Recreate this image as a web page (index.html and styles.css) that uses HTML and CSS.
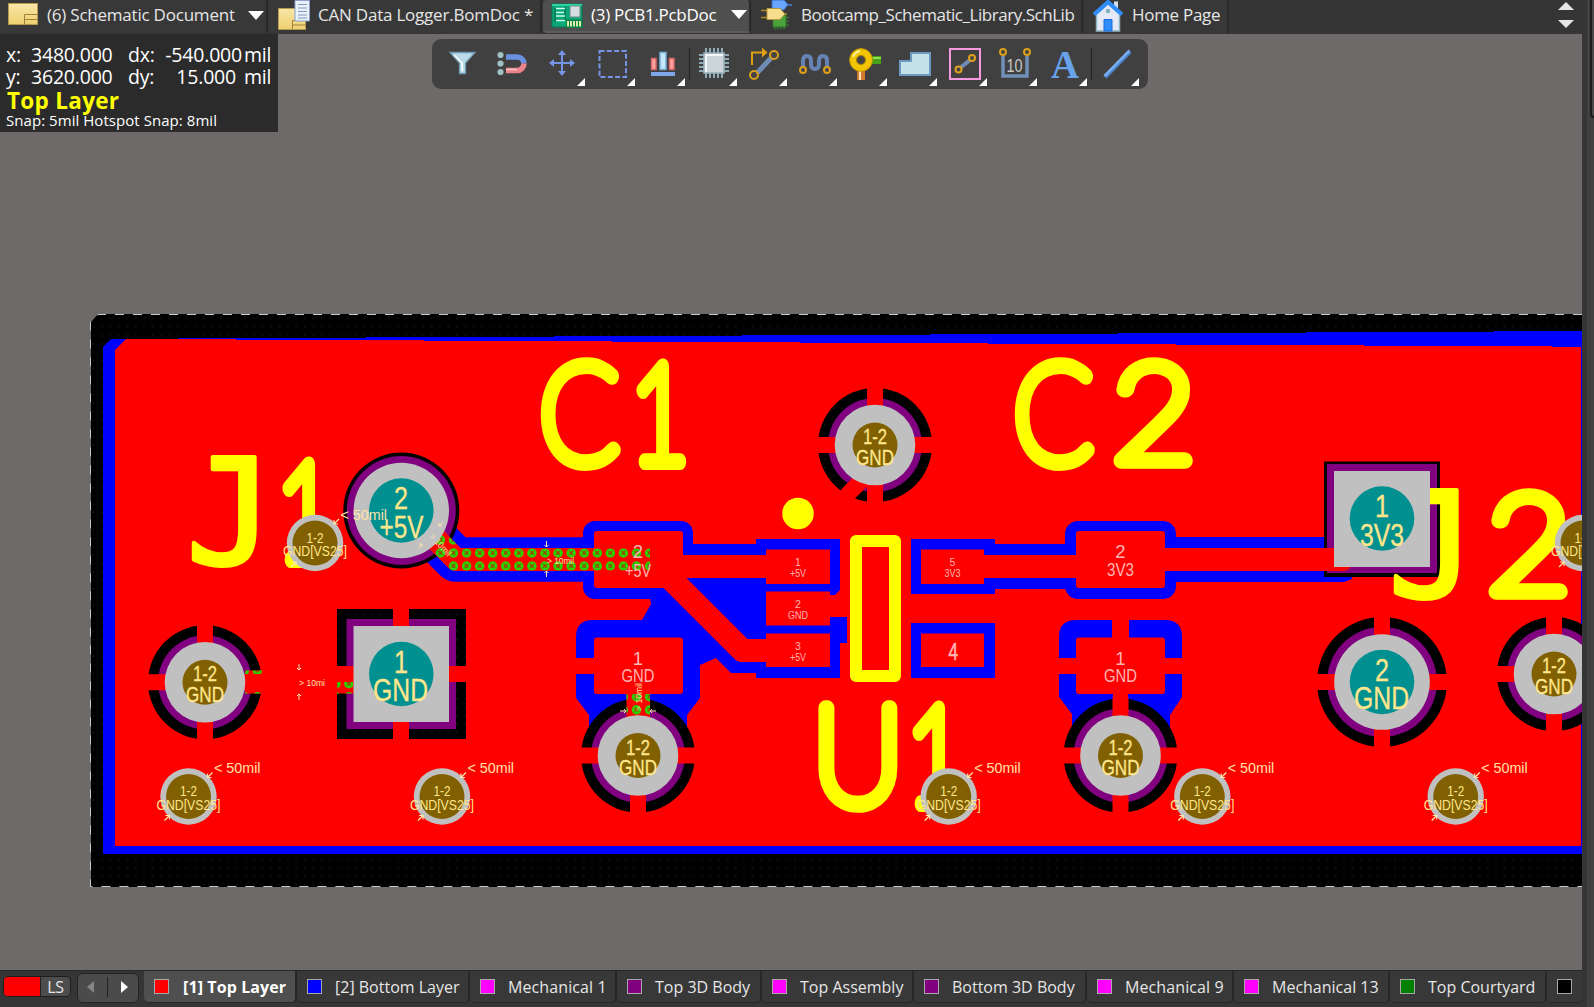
FILE: index.html
```html
<!DOCTYPE html>
<html lang="en">
<head>
<meta charset="utf-8">
<title>PCB1.PcbDoc</title>
<link rel="stylesheet" href="styles.css">
</head>
<body>
<div class="app">
<div class="main">
<nav class="doc-tabs">
  <div class="doc-tab tab-sch">
    <svg class="tab-icon" width="46" height="34" viewBox="0 0 46 34"><defs><linearGradient id="gold" x2="0" y2="1"><stop offset="0" stop-color="#f9e7a8"/><stop offset="1" stop-color="#edd070"/></linearGradient></defs><path d="M8.500 3.500h29v21h-29z" fill="url(#gold)" stroke="#b79a50"/><path d="M24.500 24.500v-10h13M24.500 19.500h13" fill="none" stroke="#a0803a"/></svg>
    <span class="label">(6) Schematic Document</span>
    <i class="drop"></i>
  </div>
  <div class="doc-tab tab-bom">
    <svg class="tab-icon" width="46" height="34" viewBox="269 0 46 34"><path d="M278.500 8.500h27v21h-27z" fill="url(#gold)" stroke="#b79a50"/><path d="M292.500 29.500v-9h13M292.500 25h13" fill="none" stroke="#a0803a"/><path d="M295 .5h14.500v20.500H295z" fill="#e9f2fb" stroke="#8ba0cc"/><path d="M298 4.500h9M298 8h9M298 11.500h9M298 15h9M298 18h9" stroke="#8296bd"/></svg>
    <span class="label">CAN Data Logger.BomDoc *</span>
  </div>
  <div class="doc-tab tab-pcb active">
    <svg class="tab-icon" width="46" height="34" viewBox="543 0 46 34"><path d="M552 4h30v23h-30z" fill="#0aa878" stroke="#067a55"/><path d="M552 4h30v2h-30z" fill="#2dd6a0"/><path d="M555 8v14M565 7v13M555 20h10" stroke="#066040" fill="none"/><path d="M556 8.500h9M556 12.500h8M556 16h9M556 20.500h9" stroke="#c8ffe8" stroke-width="1.500"/><path d="M570 6h10v11h-10z" fill="#d5dde0" stroke="#6b8c86"/><path d="M566 19.500h16.500v8.500h-16.500z" fill="#0a7d48"/><path d="M568 21v5.500M571 21v5.500M574 21v5.500M577 21v5.500M580 21v5.500" stroke="#f0ffb0" stroke-width="1.800"/></svg>
    <span class="label">(3) PCB1.PcbDoc</span>
    <i class="drop"></i>
  </div>
  <div class="doc-tab tab-lib">
    <svg class="tab-icon" width="49" height="34" viewBox="751 0 49 34"><path d="M772 15h13v12h-13z" fill="#4ba13c" stroke="#2f7b25"/><path d="M774 27.500v2M777 27.500v2M780 27.500v2M783 27.500v2M786 17.500h2M786 21h2M786 25h2" stroke="#3d8a30"/><path d="M785 5h6" stroke="#4a80e0" stroke-width="1.500"/><path d="M771 0h12l4 4.500-4 5.500h-12z" fill="#69a5ff" stroke="#3468c4"/><path d="M760 10.500h6M760 17.500h6M782 14h4" stroke="#b08a28" stroke-width="1.500"/><path d="M766 8.500h13l5 5.500-5 5.500h-13z" fill="#f6de8e" stroke="#b7953c"/></svg>
    <span class="label">Bootcamp_Schematic_Library.SchLib</span>
  </div>
  <div class="doc-tab tab-home">
    <svg class="tab-icon" width="48" height="34" viewBox="1084 0 48 34"><path d="M1114 1.500h4v9h-4z" fill="#cfe0ee"/><path d="M1096.500 14l11.500-10 11.500 10v17h-23z" fill="#e4eaf5" stroke="#8fb5c4" stroke-width="1.500"/><path d="M1104 19.500h8V31h-8z" fill="#2f8dfb" stroke="#1c68d8"/><circle cx="1108" cy="11" r="2.200" fill="#7fb0bd"/><path d="M1094 14.500L1108 2l14 12.500" fill="none" stroke="#2f8cfc" stroke-width="4"/></svg>
    <span class="label">Home Page</span>
  </div>
  <div class="scroll-tabs"><i class="tri-up"></i><i class="tri-down"></i></div>
</nav>

<section class="canvas">
<svg class="board" width="1582" height="936" viewBox="0 34 1582 936">
  <defs>
    <pattern id="dots" x="89" y="314" width="8.450" height="8.450" patternUnits="userSpaceOnUse"><path d="M4 4h1v1h-1z" fill="#2c2c2c"/></pattern>
    <pattern id="err" x="446.970" y="546.470" width="13.070" height="13.070" patternUnits="userSpaceOnUse"><circle cx="6.530" cy="6.530" r="4.700" fill="#1fe000"/><path d="M4.500 4.500l4 4M8.500 4.500l-4 4" stroke="#a33c00" stroke-width="1.300"/></pattern>
    <g id="thermal"><circle r="57" fill="#000"/><circle r="57" fill="url(#dots)"/><circle r="47" fill="#800080"/><path d="M-8-58h16V58H-8zM-58-8H58V8H-58z" fill="#f00"/></g>
    <g id="via"><circle r="40.300" fill="#c0c0c0"/><circle r="22.500" fill="#806000"/><g class="pad-text" font-size="22.500"><text x="-12" y="-1" textLength="24" lengthAdjust="spacingAndGlyphs">1-2</text><text x="-19" y="19.500" textLength="38" lengthAdjust="spacingAndGlyphs">GND</text></g></g>
    <g id="stitch"><circle r="28.200" fill="#c0c0c0"/><circle r="22.500" fill="#806000"/><g class="pad-text thin" font-size="15.500"><text x="-8.500" y="-.5" textLength="17" lengthAdjust="spacingAndGlyphs">1-2</text><text x="-32" y="13.200" textLength="64" lengthAdjust="spacingAndGlyphs">GND[VS25]</text></g><path d="M24-24l-5 5m0-4v4h4M-24 24l5-5m-4 0h4v4" fill="none" stroke="#ffe9a8" stroke-width="1.200"/></g>
    <text id="mil50" class="rule" font-size="14.500" x="25.500" y="-23.500" textLength="46.500" lengthAdjust="spacingAndGlyphs">&lt; 50mil</text>
  </defs>

  <!-- board body and copper pours -->
  <path d="M98 314H1582V887H91V322z" fill="#000"/>
  <path d="M98 314H1582V887H91V322z" fill="url(#dots)"/>
  <path d="M1582 314.500H98L90.500 322V886.500H1582" fill="none" stroke="#c8c8c8" stroke-dasharray="9 9"/>
  <path d="M111 339h67v-1h188v-1h188v-1h188v-1h188v-1h188v-1h188v-1h188v-1h88V854H103V347z" fill="#00f"/>
  <path d="M126 339h110v1h188v1h188v1h188v1h188v1h188v1h188v1h188v1h29V846H115V350z" fill="#f00"/>

  <!-- clearances on the bottom pour -->
  <g fill="#00f">
    <rect x="583" y="521" width="110" height="78" rx="12"/>
    <rect x="1065" y="521" width="111" height="78" rx="13"/>
    <path d="M693 544h63v-5h84v51l-5 5h-5v22h17v26h-7v35h-84v-5h-25l-15-15-16 7V698l-13 17v14h-98V715l-13-17V637q0-17 17-17h49l9-16-1-6h20z"/>
    <path d="M1076 620h89q17 0 17 17v60l-12 18v14h-98v-15l-13-17V637q0-17 17-17z"/>
    <path d="M911 539h84v5h75v45h-75v5h-84zM911 623h84v55h-84zM1170 537h182v42l-8 3h-174z"/>
  </g>
  <path d="M415 518L456 559.500H590M655 563l87.500 87.500H766" fill="none" stroke="#00f" stroke-width="44.700" stroke-linejoin="round"/>

  <!-- board holes -->
  <use href="#thermal" x="875" y="445"/>
  <use href="#thermal" x="638" y="755.500"/>
  <use href="#thermal" x="1120.500" y="755.500"/>
  <use href="#thermal" x="205" y="682.300"/>
  <use href="#thermal" x="1554" y="674"/>
  <circle cx="401.300" cy="510.500" r="58"/><circle cx="401.300" cy="510.500" r="54.500" fill="#800080"/>
  <circle cx="1382" cy="682" r="65"/><circle cx="1382" cy="682" r="55" fill="#800080"/>
  <path d="M1374 616h16V748h-16zM1316 674h132v16h-132z" fill="#f00"/>
  <path d="M337 609h129v130H337zM1324 461.500h116V577h-116z"/>
  <path d="M337 609h129v130H337z" fill="url(#dots)"/>
  <path d="M346.500 619H456v110H346.500zM1327 464h110v109h-110z" fill="#800080"/>
  <path d="M393 608h16V740h-16zM400 666h67v16h-67zM336 666h60v27.500h-60z" fill="#f00"/>
  <path d="M862 480l-14 14" stroke="#f00" stroke-width="16" stroke-linecap="round"/>
  <path d="M245 670.500h18v23h-18zM626.500 694h23.500v24h-23.500z" fill="#f00"/>

  <!-- top layer pads and tracks -->
  <path d="M415 518L456 559.500H600M655 563l87.500 87.500H770M680 566.500h90M980 566.500h100M1160 559.500h182" fill="none" stroke="#f00" stroke-width="23" stroke-linejoin="round"/>
  <circle cx="1342" cy="559.500" r="11.500" fill="#f00"/>
  <g fill="#f00">
    <rect x="594" y="531" width="89" height="57" rx="3"/><rect x="594" y="637.500" width="89" height="56.500" rx="3"/>
    <rect x="1076" y="531" width="89" height="57" rx="3"/><rect x="1076" y="637.500" width="89" height="56.500" rx="3"/>
    <path d="M575 658h21v16h-21zM1058 658h125v16h-125zM1112 619h17v20h-17zM1113 690h15v30h-15z"/>
    <path d="M766 549.500h64V584h-64zM766 591.500h64v34h-64zM766 633.500h64V667h-64zM921 549.500h63V584h-63zM921 633.500h63V667h-63z"/>
  </g>
  <path d="M431 534l25 25.500H650" fill="none" stroke="url(#err)" stroke-width="22"/>
  <path d="M626.500 694h23.500v24h-23.500zM245 670.500h17v3.500h-17zM245 692h17v1.500h-17zM337 682h16v6.500h-16zM337 692h16v1.500h-16z" fill="url(#err)"/>

  <!-- silkscreen -->
  <g class="silk">
    <text transform="translate(539.500 462.300) scale(.85 1)">C</text>
    <text transform="translate(630 462.300) scale(.75 1)">1</text>
    <text transform="translate(1013.500 462.300) scale(.85 1)">C</text>
    <text transform="translate(1112 462.300) scale(1.050 1)">2</text>
    <text class="slab" transform="translate(186 564) scale(1 1)">J</text>
    <text transform="translate(276 559.500) scale(.75 1)">1</text>
    <text class="slab" transform="translate(1388 597) scale(1 1)">J</text>
    <text transform="translate(1487 592.500) scale(1.050 1)">2</text>
    <text transform="translate(812 804.300) scale(.93 1)">U</text>
    <text transform="translate(906 804.300) scale(.75 1)">1</text>
  </g>
  <rect x="856" y="541" width="39" height="135" fill="none" stroke="#ff0" stroke-width="12" stroke-linejoin="round"/>
  <circle cx="798" cy="513.500" r="15.800" fill="#ff0"/>

  <!-- pads and vias -->
  <use href="#via" x="875" y="445"/><use href="#via" x="638" y="755.500"/><use href="#via" x="1120.500" y="755.500"/><use href="#via" x="205" y="682.300"/><use href="#via" x="1554" y="674"/>
  <g fill="#c0c0c0"><circle cx="401.300" cy="510.500" r="47.700"/><circle cx="1382" cy="682" r="47.800"/><path d="M353.500 626h95.500v96h-95.500zM1334 471h96v96h-96z"/></g>
  <g fill="#009090"><circle cx="401.300" cy="510.500" r="32.300"/><circle cx="1382" cy="682" r="32.300"/><circle cx="401.300" cy="674" r="32.300"/><circle cx="1382" cy="518.500" r="32.300"/></g>
  <g class="pad-text" font-size="32">
    <text x="394" y="509" textLength="14" lengthAdjust="spacingAndGlyphs">2</text><text x="379.500" y="537.500" textLength="44" lengthAdjust="spacingAndGlyphs">+5V</text>
    <text x="394" y="672.500" textLength="14" lengthAdjust="spacingAndGlyphs">1</text><text x="373" y="701" textLength="55" lengthAdjust="spacingAndGlyphs">GND</text>
    <text x="1375" y="517" textLength="14" lengthAdjust="spacingAndGlyphs">1</text><text x="1360" y="546" textLength="44" lengthAdjust="spacingAndGlyphs">3V3</text>
    <text x="1375" y="680.500" textLength="14" lengthAdjust="spacingAndGlyphs">2</text><text x="1354" y="709" textLength="55" lengthAdjust="spacingAndGlyphs">GND</text>
  </g>
  <use href="#stitch" x="315" y="543"/><use href="#stitch" x="188.500" y="796.500"/><use href="#stitch" x="442" y="796.500"/><use href="#stitch" x="948.700" y="796.500"/><use href="#stitch" x="1202.300" y="796.500"/><use href="#stitch" x="1455.700" y="796.500"/><use href="#stitch" x="1583" y="543"/>
  <use href="#mil50" x="315" y="543"/><use href="#mil50" x="188.500" y="796.500"/><use href="#mil50" x="442" y="796.500"/><use href="#mil50" x="948.700" y="796.500"/><use href="#mil50" x="1202.300" y="796.500"/><use href="#mil50" x="1455.700" y="796.500"/>

  <g class="net" font-size="18.500">
    <text x="638" y="558">2</text><text x="625" y="576.500" textLength="26" lengthAdjust="spacingAndGlyphs">+5V</text>
    <text x="638" y="665">1</text><text x="621.500" y="682" textLength="33" lengthAdjust="spacingAndGlyphs">GND</text>
    <text x="1120.500" y="558">2</text><text x="1107" y="576" textLength="27" lengthAdjust="spacingAndGlyphs">3V3</text>
    <text x="1120.500" y="665">1</text><text x="1104" y="682" textLength="33" lengthAdjust="spacingAndGlyphs">GND</text>
  </g>
  <g class="net" font-size="10.500">
    <text x="798" y="566">1</text><text x="790" y="577" textLength="16" lengthAdjust="spacingAndGlyphs">+5V</text>
    <text x="798" y="608">2</text><text x="788" y="618.700" textLength="20" lengthAdjust="spacingAndGlyphs">GND</text>
    <text x="798" y="649.500">3</text><text x="790" y="660.500" textLength="16" lengthAdjust="spacingAndGlyphs">+5V</text>
    <text x="952.500" y="566">5</text><text x="944.500" y="577" textLength="16" lengthAdjust="spacingAndGlyphs">3V3</text>
  </g>
  <text class="net four" x="948.500" y="659.500" font-size="23" textLength="9.500" lengthAdjust="spacingAndGlyphs">4</text>
  <g class="rule" font-size="9">
    <text x="547" y="563.500" textLength="27" lengthAdjust="spacingAndGlyphs">&gt; 10mil</text>
    <text x="299" y="685.500" textLength="26" lengthAdjust="spacingAndGlyphs">&gt; 10mi</text>
    <text transform="translate(641.500 711) rotate(-90)" textLength="28" lengthAdjust="spacingAndGlyphs">&gt; 10mil</text>
    <text transform="translate(429 537) rotate(47)" textLength="27" lengthAdjust="spacingAndGlyphs">&gt; 10mil</text>
  </g>
  <path d="M546.500 541v6m-2-2l2 2 2-2M546.500 577v-6m-2 2l2-2 2 2M299 664v6m-2-2l2 2 2-2M299 700v-6m-2 2l2-2 2 2M620 711h6m-2-2l2 2-2 2M656 711h-6m2-2l-2 2 2 2M443 522l-4 4v-3m0 3h3M418 548l4-4v3m0-3h-3" fill="none" stroke="#ffe0b0"/>
</svg>

<div class="hud">
  <div class="hud-grid">
    <span>x:</span><span>3480.000</span><span>dx:</span><span class="num">-540.000</span><span>mil</span>
    <span>y:</span><span>3620.000</span><span>dy:</span><span class="num pad">15.000</span><span>mil</span>
  </div>
  <div class="hud-layer">Top Layer</div>
  <div class="hud-snap">Snap: 5mil Hotspot Snap: 8mil</div>
</div>

<div class="toolbar">
  <svg width="53" height="50" viewBox="432 39 53 50"><path d="M450 52.500h25l-9.500 10.500v10.500h-6V63z" fill="#b9dce8" stroke="#6f9ab5" stroke-width="1.300"/><path d="M454 55l8 8v8" stroke="#fff" stroke-width="1.500" fill="none"/></svg>
  <svg width="50" height="50" viewBox="485 39 50 50"><g fill="#9fc0c4"><circle cx="500.500" cy="55" r="3.100"/><circle cx="500.500" cy="63.500" r="3.100"/><circle cx="500.500" cy="72" r="3.100"/></g><path d="M506 57h11a7 7 0 0 1 7 6.500" fill="none" stroke="#6a90e0" stroke-width="5.500"/><path d="M506 70.500h11a7 7 0 0 0 7-7" fill="none" stroke="#ea8488" stroke-width="5.500"/><path d="M506 69.500h11" stroke="#ffc0c0" stroke-width="1.500"/></svg>
  <svg width="50" height="50" viewBox="535 39 50 50"><path d="M551 63h23M562 51.500v23" stroke="#7795e6" stroke-width="2"/><path d="M549 63l5-4v8zM575 63l-5-4v8zM562 50l-4 5h8zM562 76l-4-5h8z" fill="#7795e6"/><path class="more" d="M585 78v8h-8z"/></svg>
  <svg width="50" height="50" viewBox="585 39 50 50"><rect x="599.500" y="51" width="26.500" height="26" fill="none" stroke="#7795e6" stroke-width="2" stroke-dasharray="5 2.300"/><path class="more" d="M635 78v8h-8z"/></svg>
  <svg width="50" height="50" viewBox="635 39 50 50"><path d="M651.500 58.500h4.500v11h-4.500zM669.500 58.500h4.500v11h-4.500z" fill="#ffa4a0" stroke="#d8666a" stroke-width="1.500"/><path d="M660 52.500h6v17h-6z" fill="#c4e8f8" stroke="#78b0d8" stroke-width="1.500"/><path d="M651 74h24" stroke="#7ea6e8" stroke-width="4"/><path class="more" d="M685 78v8h-8z"/></svg>
  <i class="sep"></i>
  <svg width="47" height="50" viewBox="690 39 47 50"><path d="M706 48v30M710 48v30M714 48v30M718 48v30M722 48v30M699 55h30M699 59h30M699 63h30M699 67h30M699 71h30" stroke="#8fabb8" stroke-width="2"/><path d="M704 53h20v20h-20z" fill="#ccd5da" stroke="#9ab0ba" stroke-width="1.500"/><path d="M706 72V55h17" fill="none" stroke="#f4f7f8" stroke-width="2"/><path class="more" d="M737 78v8h-8z"/></svg>
  <svg width="50" height="50" viewBox="737 39 50 50"><path d="M757 73l15-16" stroke="#6e8cb4" stroke-width="5"/><circle cx="754" cy="75" r="4" class="node"/><circle cx="774" cy="55" r="4" class="node"/><path d="M752 65V52.500h10" fill="none" stroke="#e0a010" stroke-width="2"/><path d="M762 47.500l5.500 5-5.500 5z" fill="#e0a010"/><path class="more" d="M787 78v8h-8z"/></svg>
  <svg width="50" height="50" viewBox="787 39 50 50"><path d="M803 67v-6q0-5 4-5t4 5v3q0 5 4 5t4-5v-3q0-5 4-5t4 5v6" fill="none" stroke="#6683b4" stroke-width="4"/><circle cx="803" cy="70" r="3" class="node"/><circle cx="827" cy="70" r="3" class="node"/><path class="more" d="M837 78v8h-8z"/></svg>
  <svg width="50" height="50" viewBox="837 39 50 50"><path d="M870 60h11" stroke="#43a018" stroke-width="8"/><path d="M873 58h8" stroke="#8fe04a" stroke-width="2"/><path d="M861 68v12" stroke="#cf7a30" stroke-width="8"/><path d="M860 70v10" stroke="#ffe0b8" stroke-width="2"/><circle cx="861" cy="60" r="8" fill="none" stroke="#f2c500" stroke-width="6.500"/><circle cx="861" cy="60" r="11.400" fill="none" stroke="#c99a00"/><circle cx="861" cy="60" r="4.500" fill="#444" stroke="#b48a00"/><path d="M853 57q2-5 7-6" fill="none" stroke="#fff3a0" stroke-width="1.800"/><path class="more" d="M887 78v8h-8z"/></svg>
  <svg width="50" height="50" viewBox="887 39 50 50"><path d="M900 75V61h11v-8h19v22z" fill="#c5e2eb" stroke="#6c9ac0" stroke-width="2"/><path class="more" d="M937 78v8h-8z"/></svg>
  <svg width="50" height="50" viewBox="937 39 50 50"><rect x="950" y="49" width="30" height="30" fill="none" stroke="#f79ae0" stroke-width="2"/><path d="M960 68l10-8" stroke="#6e8cb4" stroke-width="4"/><circle cx="958.500" cy="69.500" r="3" class="node"/><circle cx="972" cy="58" r="3" class="node"/><path class="more" d="M987 78v8h-8z"/></svg>
  <svg width="50" height="50" viewBox="987 39 50 50"><path d="M1003 56v20h24V56" fill="none" stroke="#7090b8" stroke-width="3.500"/><circle cx="1003" cy="52" r="3" class="node"/><circle cx="1027" cy="52" r="3" class="node"/><text x="1006.500" y="71.500" font-size="18" textLength="16" lengthAdjust="spacingAndGlyphs" class="ten">10</text><path class="more" d="M1037 78v8h-8z"/></svg>
  <svg width="50" height="50" viewBox="1037 39 50 50"><text x="1051" y="78" class="bigA" textLength="28" lengthAdjust="spacingAndGlyphs">A</text><path class="more" d="M1087 78v8h-8z"/></svg>
  <i class="sep"></i>
  <svg width="50" height="50" viewBox="1092 39 50 50"><path d="M1105 77l25-25.500" stroke="#4a80c8" stroke-width="4.500"/><path d="M1104.500 76l25-25.500" stroke="#78acf0" stroke-width="2.500"/><path class="more" d="M1139 78v8h-8z"/></svg>
</div>
</section>

<footer class="layers">
  <div class="layer-set"><i class="cur"></i><span>LS</span></div>
  <div class="nav-arrows"><i class="left"></i><i class="bar"></i><i class="right"></i></div>
  <div class="layer-tabs">
    <div class="layer l1 active"><i class="sw red"></i><span>[1] Top Layer</span></div>
    <div class="layer l2"><i class="sw blue"></i><span>[2] Bottom Layer</span></div>
    <div class="layer l3"><i class="sw magenta"></i><span>Mechanical 1</span></div>
    <div class="layer l4"><i class="sw purple"></i><span>Top 3D Body</span></div>
    <div class="layer l5"><i class="sw magenta"></i><span>Top Assembly</span></div>
    <div class="layer l6"><i class="sw purple"></i><span>Bottom 3D Body</span></div>
    <div class="layer l7"><i class="sw magenta"></i><span>Mechanical 9</span></div>
    <div class="layer l8"><i class="sw magenta"></i><span>Mechanical 13</span></div>
    <div class="layer l9"><i class="sw green"></i><span>Top Courtyard</span></div>
    <div class="layer l10"><i class="sw black"></i></div>
  </div>
</footer>
</div>
<aside class="side"><i class="side-tab"></i></aside>
</div>
</body>
</html>
```
FILE: styles.css
```css
* { box-sizing: border-box; }
body { margin: 0; background: #353535; font-family: "Open Sans", "Noto Sans", sans-serif; color: #e6e6e6; }
.app { display: flex; width: 1594px; height: 1007px; overflow: hidden; }
.main { display: flex; flex-direction: column; width: 1582px; flex: none; }

.doc-tabs { display: flex; height: 34px; background: #353535; gap: 1px; }
.doc-tab { display: flex; align-items: center; height: 33px; background: #383838; border-right: 2px solid #2a2a2a; font-size: 17px; white-space: nowrap; position: relative; }
.doc-tab .label { line-height: 30px; margin-bottom: 4px; }
.doc-tab.active { background: #4f4f4f; color: #fff; border-bottom: 2px solid #5c5c5c; border-radius: 4px; }
.doc-tab.active .label { margin-bottom: 2px; }
.tab-icon { flex: none; display: block; }
.tab-sch { width: 268px; letter-spacing: -.22px; }
.tab-sch .tab-icon { margin-right: 1px; }
.tab-bom { width: 273px; letter-spacing: -.22px; }
.tab-bom .tab-icon { margin-right: 3px; }
.tab-pcb { width: 208px; letter-spacing: -.3px; }
.tab-pcb .tab-icon { margin-right: 2px; }
.tab-lib { width: 331px; letter-spacing: -.46px; }
.tab-home { width: 145px; letter-spacing: -.3px; }
.active .tab-icon { align-self: flex-start; }
.drop { border: 8px solid transparent; border-top: 9px solid #fff; border-bottom: 0; margin-left: auto; margin-right: 2px; margin-bottom: 3px; }
.scroll-tabs { display: flex; flex-direction: column; gap: 10px; margin-left: auto; margin-right: 8px; padding-top: 2px; }
.tri-up, .tri-down { border: 8px solid transparent; }
.tri-up { border-top: 0; border-bottom: 8px solid #e6e6e6; }
.tri-down { border-bottom: 0; border-top: 8px solid #e6e6e6; }

.canvas { position: relative; height: 936px; background: #6e6a69; overflow: hidden; }
.board { display: block; }
.board text { font-family: "Liberation Sans", Arial, sans-serif; }
.pad-text { fill: #ffe68c; stroke: #ffe68c; stroke-width: .3px; }
.pad-text.thin { stroke-width: 0; }
.rule { fill: #ffe2a8; }
.net { fill: #ffb4b4; }
.net text { text-anchor: middle; }
.net text[textLength] { text-anchor: start; }
.net.four { stroke: #ffb4b4; stroke-width: .6px; }
.board .silk text { font-family: Lato, sans-serif; font-weight: 100; font-size: 137px; fill: #ff0; stroke: #ff0; stroke-width: 15.500px; stroke-linejoin: round; }
.board .silk .slab { font-family: "DejaVu Sans Mono", monospace; font-weight: 400; font-size: 147px; stroke-width: 4px; }

.hud { position: absolute; left: 0; top: 0; width: 278px; height: 98px; background: #2b2b2b; color: #fff; padding: 10px 0 0 6px; white-space: nowrap; }
.hud-grid { display: grid; grid-template-columns: 25px 97px 34px 80px 32px; grid-auto-rows: 22px; line-height: 22px; font-size: 19.500px; letter-spacing: -.2px; }
.hud-grid .num { text-align: right; }
.hud-grid .num + span { padding-left: 2px; }
.hud-grid .pad { padding-right: 6px; }
.hud-layer { font-weight: 700; font-size: 22.500px; line-height: 24px; color: #ff0; letter-spacing: .3px; padding: 1px 0 0 1px; }
.hud-snap { font-size: 15px; line-height: 16px; letter-spacing: .05px; margin-top: -1px; }

.toolbar { position: absolute; left: 432px; top: 5px; width: 716px; height: 50px; background: #404040; border-radius: 9px; display: flex; }
.toolbar svg { flex: none; display: block; }
.sep { width: 1px; height: 32px; margin: 9px 0 0 4px; background: #232323; flex: none; }
.more { fill: #fff; }
.node { fill: #444; stroke: #dca01c; stroke-width: 2px; }
.ten { font-family: "Liberation Sans", sans-serif; fill: #c8c8c8; }
.bigA { font-family: "Liberation Serif", serif; font-weight: 700; font-size: 39px; fill: #67a2ea; }

.layers { display: flex; height: 37px; background: #353535; border-top: 1px solid #262626; font-size: 16px; color: #e6e6e6; white-space: nowrap; }
.layer-set { display: flex; width: 68px; height: 21px; margin: 5px 6px 0 3px; border: 1px solid #1e1e1e; border-radius: 5px; background: #4d4d4d; overflow: hidden; }
.cur { width: 37px; background: #f00; border-right: 1px solid #222; }
.layer-set span { flex: 1; text-align: center; line-height: 20px; letter-spacing: -.3px; }
.nav-arrows { display: flex; align-items: center; justify-content: space-between; width: 62px; height: 30px; margin: 2px 5px 0 0; padding: 0 10px 2px 9px; background: #4b4b4b; border: 1px solid #222; border-radius: 6px; }
.left { border: 6px solid transparent; border-right: 7px solid #858585; border-left: 0; }
.right { border: 6px solid transparent; border-left: 7px solid #fff; border-right: 0; }
.bar { width: 1px; height: 20px; background: #222; }
.layer-tabs { display: flex; }
.layer { display: flex; align-items: center; height: 32px; padding: 0 0 1px 10px; border-right: 2px solid #272727; border-bottom: 1px solid #272727; border-radius: 0 0 5px 5px; background: #383838; }
.layer span { padding-top: 1px; }
.layer.active { background: #4f4f4f; color: #fff; font-weight: 700; }
.sw { width: 15px; height: 15px; border: 1px solid #a8a8a8; margin-right: 13px; flex: none; }
.active .sw { margin-right: 14px; }
.red { background: #f00; } .blue { background: #00f; } .magenta { background: #f0f; } .purple { background: #800080; } .green { background: #008000; } .black { background: #000; }
.l1 { width: 153px; letter-spacing: .1px; }
.l2 { width: 173px; }
.l3 { width: 147px; letter-spacing: .1px; }
.l4 { width: 145px; }
.l5 { width: 152px; }
.l6 { width: 173px; }
.l7 { width: 147px; letter-spacing: .1px; }
.l8 { width: 156px; }
.l9 { width: 157px; }
.l10 { width: 35px; border-right: 0; }

.side { width: 12px; background: #404040; border-left: 5px solid #353535; padding-left: 3px; }
.side-tab { display: block; height: 118px; border: 1px solid #1e1e1e; border-width: 0 0 2px 2px; border-radius: 0 0 0 5px; background: #4b4b4b; }
```
